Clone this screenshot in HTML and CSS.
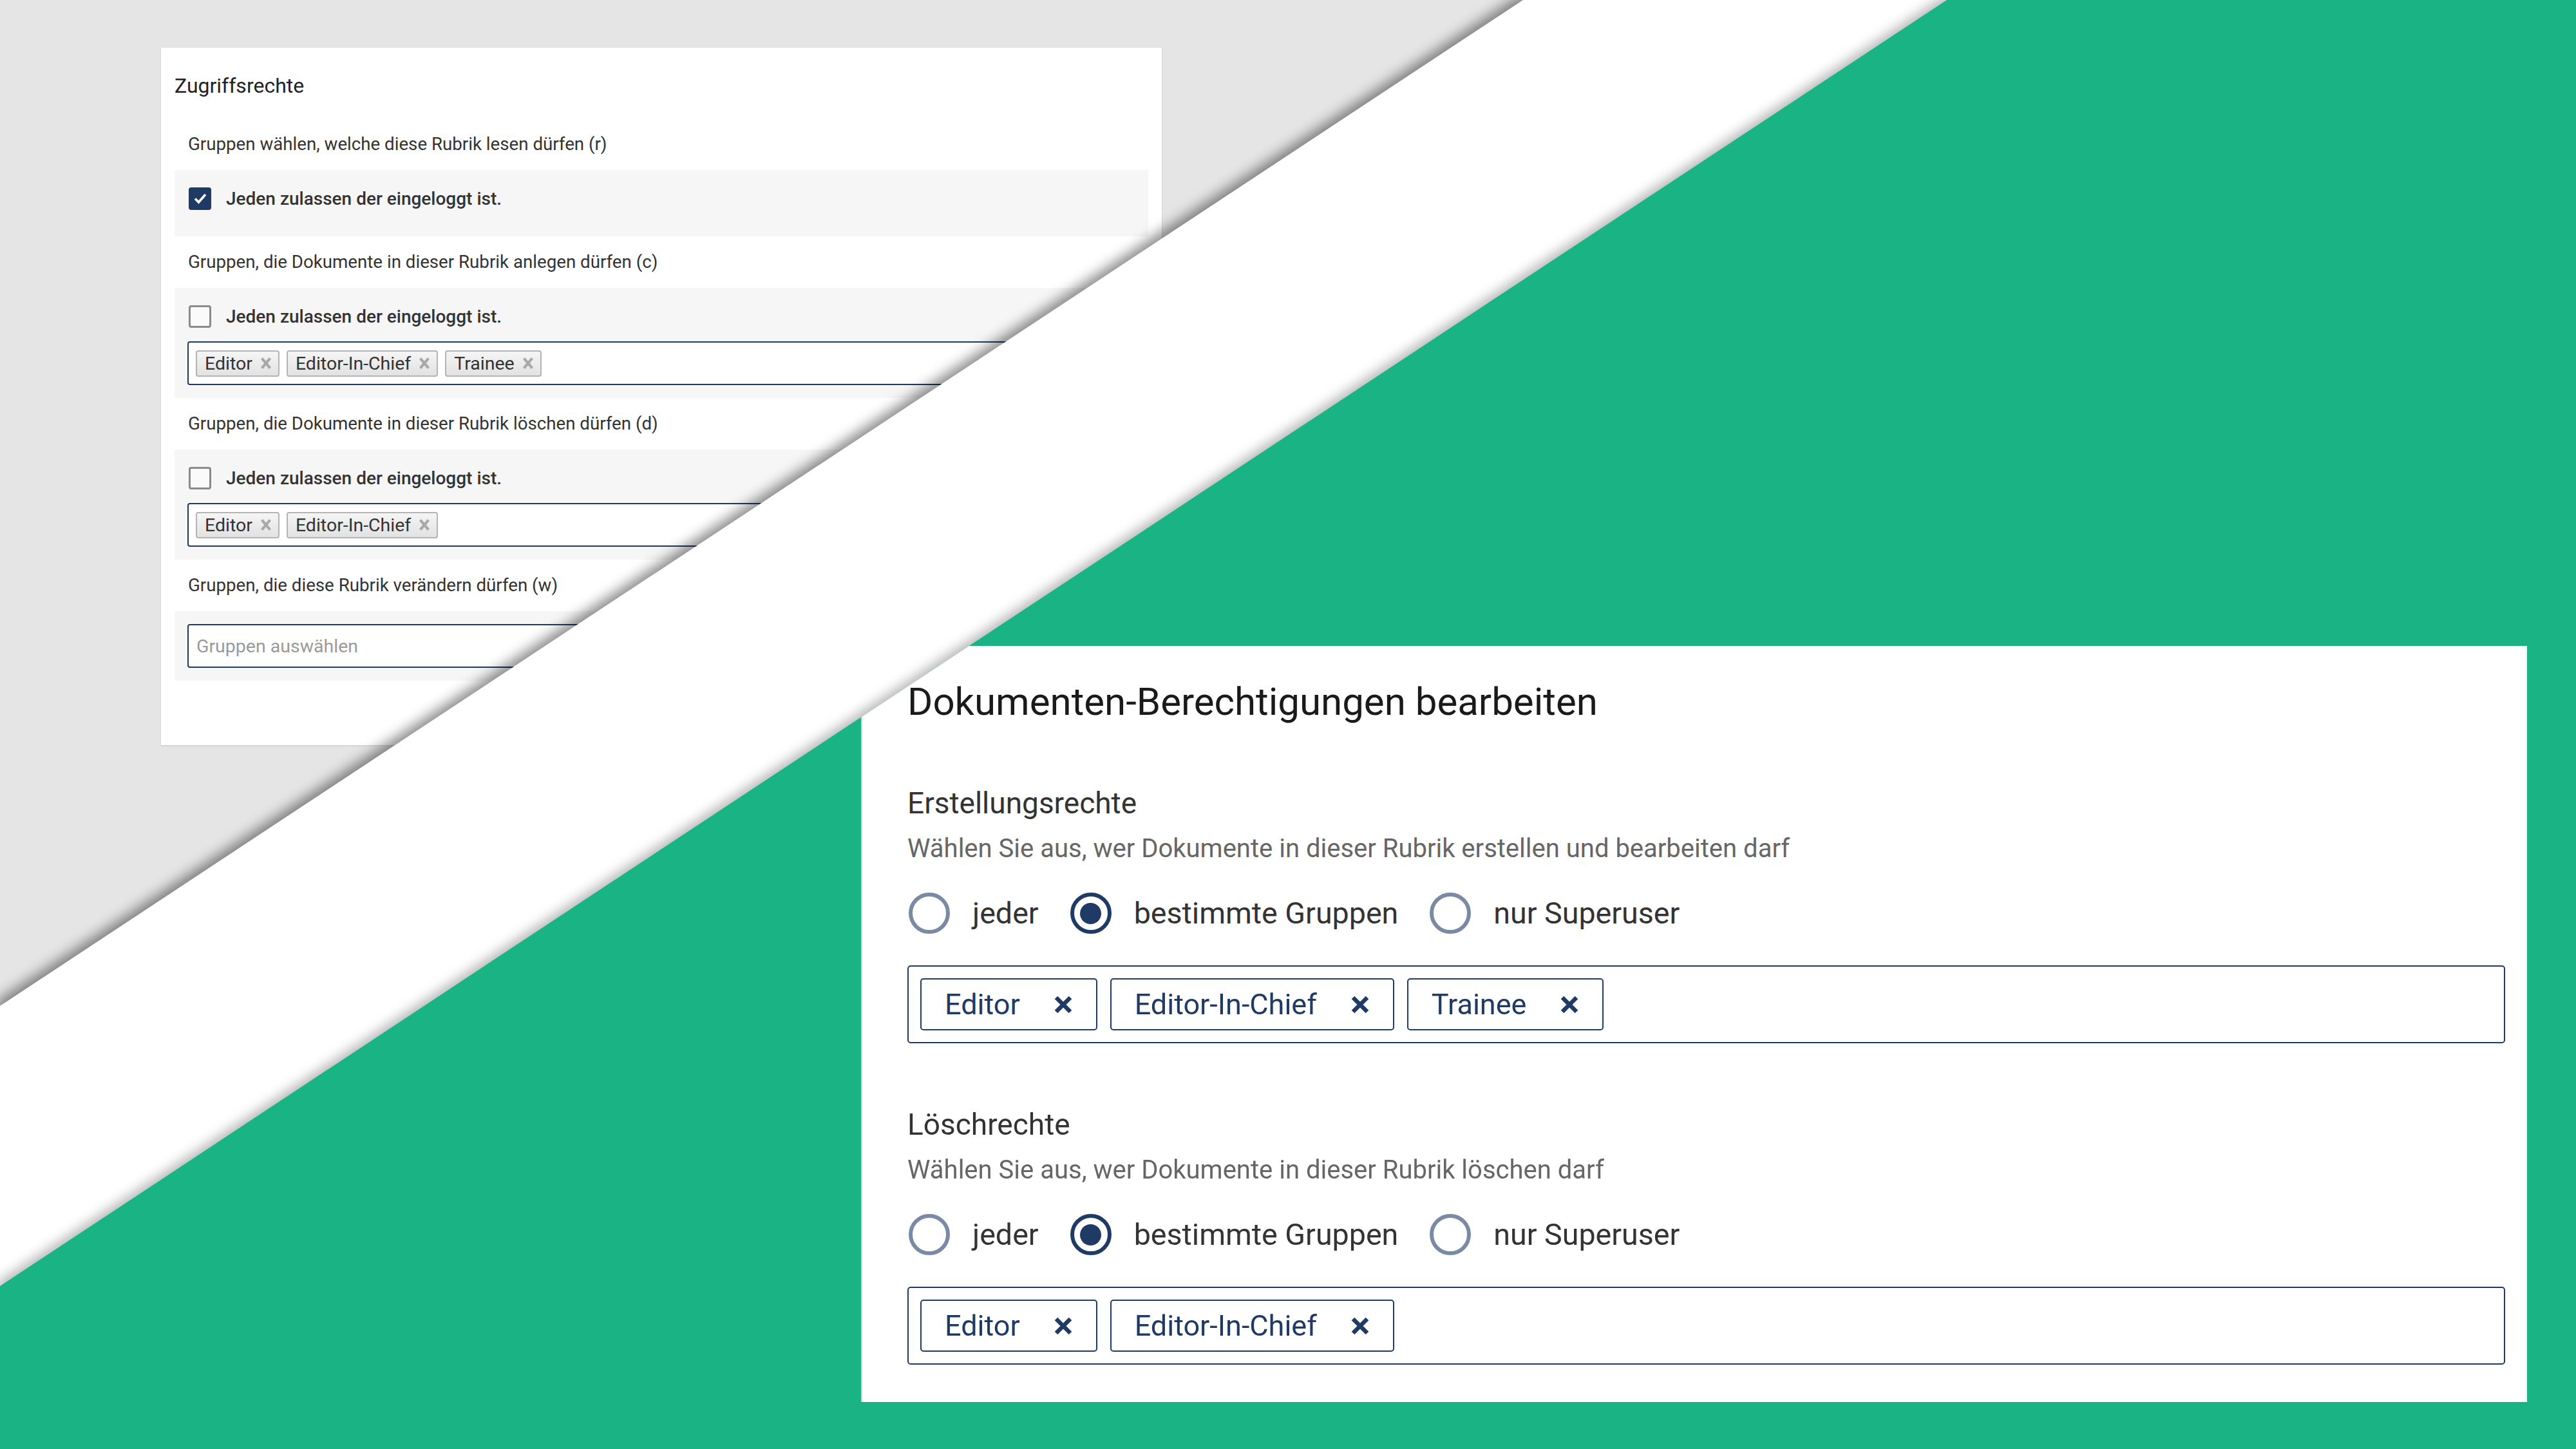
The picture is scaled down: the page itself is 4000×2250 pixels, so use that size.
FILE: index.html
```html
<!DOCTYPE html>
<html lang="de">
<head>
  <meta charset="UTF-8">
  <meta name="viewport" content="width=device-width, initial-scale=1.0">
  <title>Rubrik-Berechtigungen</title>
  <link rel="stylesheet" href="styles.css">
</head>
<body>
  <div class="stage">

    <!-- old form on gray -->
    <div class="layer layer-old">
      <div class="old-panel">
        <h2 class="old-title">Zugriffsrechte</h2>

        <div class="old-label">Gruppen wählen, welche diese Rubrik lesen dürfen (r)</div>
        <div class="old-box">
          <label class="old-check">
            <span class="tick checked">
              <svg width="24" height="24" viewBox="0 0 24 24"><polyline points="4,12.5 9.5,18 20,6" fill="none" stroke="#fff" stroke-width="3.6"/></svg>
            </span>
            Jeden zulassen der eingeloggt ist.
          </label>
        </div>

        <div class="old-label">Gruppen, die Dokumente in dieser Rubrik anlegen dürfen (c)</div>
        <div class="old-box">
          <label class="old-check"><span class="tick"></span>Jeden zulassen der eingeloggt ist.</label>
          <div class="old-input">
            <span class="old-tag">Editor <i class="old-x"></i></span>
            <span class="old-tag">Editor-In-Chief <i class="old-x"></i></span>
            <span class="old-tag">Trainee <i class="old-x"></i></span>
          </div>
        </div>

        <div class="old-label">Gruppen, die Dokumente in dieser Rubrik löschen dürfen (d)</div>
        <div class="old-box">
          <label class="old-check"><span class="tick"></span>Jeden zulassen der eingeloggt ist.</label>
          <div class="old-input">
            <span class="old-tag">Editor <i class="old-x"></i></span>
            <span class="old-tag">Editor-In-Chief <i class="old-x"></i></span>
          </div>
        </div>

        <div class="old-label">Gruppen, die diese Rubrik verändern dürfen (w)</div>
        <div class="old-box">
          <div class="old-input">
            <span class="placeholder">Gruppen auswählen</span>
          </div>
        </div>
      </div>
    </div>

    <!-- white strip between the two halves -->
    <div class="layer band-wrap">
      <div class="band"></div>
    </div>

    <!-- new form on green -->
    <div class="layer green-wrap">
      <div class="green">
        <div class="card">
          <h1 class="card-title">Dokumenten-Berechtigungen bearbeiten</h1>

          <section class="perm">
            <h3 class="perm-title">Erstellungsrechte</h3>
            <p class="perm-hint">Wählen Sie aus, wer Dokumente in dieser Rubrik erstellen und bearbeiten darf</p>
            <div class="radios">
              <label class="radio"><span class="ring"></span>jeder</label>
              <label class="radio on"><span class="ring"></span>bestimmte Gruppen</label>
              <label class="radio"><span class="ring"></span>nur Superuser</label>
            </div>
            <div class="chips">
              <span class="chip">Editor <svg class="chip-x" viewBox="0 0 30 28"><path d="M4 3 L26 25 M26 3 L4 25"/></svg></span>
              <span class="chip">Editor-In-Chief <svg class="chip-x" viewBox="0 0 30 28"><path d="M4 3 L26 25 M26 3 L4 25"/></svg></span>
              <span class="chip">Trainee <svg class="chip-x" viewBox="0 0 30 28"><path d="M4 3 L26 25 M26 3 L4 25"/></svg></span>
            </div>
          </section>

          <section class="perm">
            <h3 class="perm-title">Löschrechte</h3>
            <p class="perm-hint">Wählen Sie aus, wer Dokumente in dieser Rubrik löschen darf</p>
            <div class="radios">
              <label class="radio"><span class="ring"></span>jeder</label>
              <label class="radio on"><span class="ring"></span>bestimmte Gruppen</label>
              <label class="radio"><span class="ring"></span>nur Superuser</label>
            </div>
            <div class="chips">
              <span class="chip">Editor <svg class="chip-x" viewBox="0 0 30 28"><path d="M4 3 L26 25 M26 3 L4 25"/></svg></span>
              <span class="chip">Editor-In-Chief <svg class="chip-x" viewBox="0 0 30 28"><path d="M4 3 L26 25 M26 3 L4 25"/></svg></span>
            </div>
          </section>
        </div>
      </div>
    </div>

  </div>
</body>
</html>
```

FILE: styles.css
```css
body {
  margin: 0;
  font-family: Roboto, "Noto Sans", Arial, sans-serif;
  overflow: hidden;
}
.stage {
  position: relative;
  width: 4000px;
  height: 2250px;
  background: #e5e5e5;
  overflow: hidden;
}
.layer {
  position: absolute;
  top: 0;
  left: 0;
  width: 4000px;
  height: 2250px;
}

/* ---------- old form ---------- */
.old-panel {
  position: absolute;
  left: 250px;
  top: 74px;
  width: 1512px;
  padding: 37px 21px 100px;
  background: #fff;
  box-shadow: 0 0 0 1px rgba(0, 0, 0, 0.03), 0 2px 3px rgba(0, 0, 0, 0.06);
}
.old-title {
  margin: 0;
  font-size: 32px;
  line-height: 44px;
  font-weight: 400;
  color: #222;
}
.old-label {
  margin: 22px 0;
  padding-left: 21px;
  font-size: 27.7px;
  line-height: 36px;
  color: #333;
}
.old-title + .old-label {
  margin-top: 51px;
}
.old-box {
  background: #f6f6f6;
  padding: 20px;
}
.old-check {
  display: flex;
  align-items: center;
  height: 48px;
  margin-bottom: 15px;
  padding-left: 2px;
  font-size: 28px;
  font-weight: 500;
  color: #333;
}
.tick {
  display: flex;
  align-items: center;
  justify-content: center;
  width: 35px;
  height: 35px;
  margin-right: 23px;
  box-sizing: border-box;
  border: 3px solid #8a8a8a;
  border-radius: 4px;
  background: #fafafa;
}
.tick.checked {
  background: #1f3a64;
  border-color: #1f3a64;
}
.old-input {
  display: flex;
  align-items: center;
  gap: 11px;
  height: 68px;
  box-sizing: border-box;
  padding: 0 11px;
  border: 2px solid #1f3a64;
  border-radius: 4px;
  background: #fff;
}
.old-tag {
  display: inline-flex;
  align-items: center;
  gap: 13px;
  height: 41px;
  box-sizing: border-box;
  padding: 0 11px 0 12px;
  border: 2px solid #b4b4b4;
  border-radius: 4px;
  background: linear-gradient(#f5f5f5, #e2e2e2);
  font-size: 28.5px;
  color: #333;
}
.old-x {
  position: relative;
  width: 16px;
  height: 16px;
}
.old-x::before,
.old-x::after {
  content: "";
  position: absolute;
  left: 6px;
  top: -2px;
  width: 4px;
  height: 20px;
  background: #a8a8a8;
  transform: rotate(40deg);
}
.old-x::after {
  transform: rotate(-40deg);
}
.placeholder {
  padding-left: 1px;
  font-size: 28.5px;
  color: #9a9a9a;
}

/* ---------- diagonal strip ---------- */
.band-wrap {
  filter: drop-shadow(-5px -8px 10px rgba(0, 0, 0, 0.45));
}
.band {
  position: absolute;
  inset: 0;
  background: #fff;
  clip-path: polygon(2365px 0, 4000px 0, 4000px 2250px, 0 2250px, 0 1562px);
}
.green-wrap {
  filter: drop-shadow(-4px -6px 9px rgba(0, 0, 0, 0.28));
}
.green {
  position: absolute;
  inset: 0;
  background: #19b384;
  clip-path: polygon(3023px 0, 4000px 0, 4000px 2250px, 0 2250px, 0 1997px);
}

/* ---------- new form ---------- */
.card {
  position: absolute;
  left: 1337px;
  top: 1003px;
  width: 2481px;
  padding: 51px 34px 58px 70px;
  border-left: 2px solid #d2d2d2;
  background: #fff;
}
.card-title {
  margin: 0 0 93px;
  font-size: 60px;
  line-height: 72px;
  font-weight: 400;
  color: #1a1a1a;
}
.perm + .perm {
  margin-top: 98px;
}
.perm-title {
  margin: 0 0 19px;
  font-size: 46px;
  line-height: 56px;
  font-weight: 400;
  color: #333;
}
.perm-hint {
  margin: 0 0 44px;
  font-size: 40px;
  line-height: 48px;
  color: #666;
}
.radios {
  display: flex;
  align-items: center;
  height: 64px;
  margin-bottom: 49px;
  padding-left: 2px;
}
.radio {
  display: flex;
  align-items: center;
  gap: 35px;
  margin-right: 49px;
  font-size: 46.6px;
  line-height: 56px;
  color: #333;
}
.ring {
  display: flex;
  align-items: center;
  justify-content: center;
  width: 64px;
  height: 64px;
  box-sizing: border-box;
  border: 6px solid #7a8aa5;
  border-radius: 50%;
}
.radio.on .ring {
  border-color: #1f3a64;
}
.radio.on .ring::after {
  content: "";
  width: 33px;
  height: 33px;
  border-radius: 50%;
  background: #1f3a64;
}
.chips {
  display: flex;
  align-items: center;
  gap: 20px;
  height: 121px;
  box-sizing: border-box;
  padding: 0 18px;
  border: 2px solid #1f3a64;
  border-radius: 5px;
}
.chip {
  display: inline-flex;
  align-items: center;
  gap: 52px;
  height: 81px;
  box-sizing: border-box;
  padding: 0 36px;
  border: 2px solid #1f3a64;
  border-radius: 5px;
  font-size: 45px;
  color: #1f3a64;
}
.chip-x {
  width: 30px;
  height: 28px;
  fill: none;
  stroke: #1f3a64;
  stroke-width: 6.5;
}
```
